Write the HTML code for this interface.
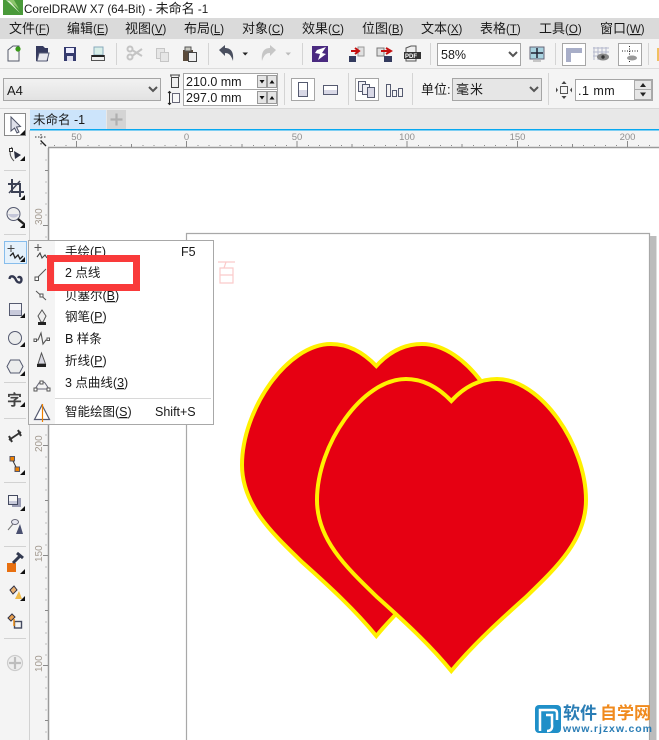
<!DOCTYPE html>
<html><head><meta charset="utf-8"><style>
html,body{margin:0;padding:0;background:#fff;width:659px;height:740px;overflow:hidden}
svg{display:block}
text{font-family:"Liberation Sans","Noto Sans CJK SC",sans-serif;font-size:12.5px;fill:#1a1a1a}
.m{font-size:13px}
.l{font-size:11.5px}
.rl{font-size:9.5px;fill:#8f8f8f}
.rv{font-size:10px;fill:#a39a90}
</style></head><body>
<svg width="659" height="740" viewBox="0 0 659 740" xmlns="http://www.w3.org/2000/svg">
<defs>
<path id="h" d="M451.3 401C437 386 422 379 406 379C362 379 317 445 317 500C317 540 347 568 377 597C405 622 430 645 451.3 671C473 645 498 622 526 597C556 568 586 540 586 500C586 445 541 379 497 379C481 379 465 386 451.3 401Z" fill="#e60012" stroke="#fff000" stroke-width="4"/>
<path id="tri" d="M0 5L5 5L5 0Z" fill="#111"/>
<linearGradient id="cb" x1="0" y1="0" x2="0" y2="1"><stop offset="0" stop-color="#f2f2f2"/><stop offset="1" stop-color="#e2e2e2"/></linearGradient>
</defs>
<rect width="659" height="740" fill="#fff"/>

<!-- title -->
<rect x="3" y="0" width="20" height="15" fill="#4a9a3a"/>
<path d="M6 0L20 13L10 1Z" fill="#dff0d0"/><path d="M8 0L19 9L14 0Z" fill="#8cc66c"/>
<text x="24" y="13" style="font-size:13px"><tspan style="font-size:11.6px">CorelDRAW X7 (64-Bit) - </tspan>未命名<tspan style="font-size:11.6px"> -1</tspan></text>

<!-- menu -->
<rect y="18" width="659" height="21" fill="#dadada"/>
<text class="m" x="9" y="33">文件<tspan class="l">(<tspan text-decoration="underline">F</tspan>)</tspan></text>
<text class="m" x="67" y="33">编辑<tspan class="l">(<tspan text-decoration="underline">E</tspan>)</tspan></text>
<text class="m" x="125" y="33">视图<tspan class="l">(<tspan text-decoration="underline">V</tspan>)</tspan></text>
<text class="m" x="184" y="33">布局<tspan class="l">(<tspan text-decoration="underline">L</tspan>)</tspan></text>
<text class="m" x="242" y="33">对象<tspan class="l">(<tspan text-decoration="underline">C</tspan>)</tspan></text>
<text class="m" x="302" y="33">效果<tspan class="l">(<tspan text-decoration="underline">C</tspan>)</tspan></text>
<text class="m" x="362" y="33">位图<tspan class="l">(<tspan text-decoration="underline">B</tspan>)</tspan></text>
<text class="m" x="421" y="33">文本<tspan class="l">(<tspan text-decoration="underline">X</tspan>)</tspan></text>
<text class="m" x="480" y="33">表格<tspan class="l">(<tspan text-decoration="underline">T</tspan>)</tspan></text>
<text class="m" x="539" y="33">工具<tspan class="l">(<tspan text-decoration="underline">O</tspan>)</tspan></text>
<text class="m" x="600" y="33">窗口<tspan class="l">(<tspan text-decoration="underline">W</tspan>)</tspan></text>

<!-- toolbars -->
<rect y="39" width="659" height="69" fill="#f4f4f4"/>
<rect y="68" width="659" height="1" fill="#dcdcdc"/>
<rect y="108" width="659" height="1" fill="#d8d8d8"/>
<g fill="#d4d4d4">
<rect x="116" y="43" width="1" height="22"/><rect x="208" y="43" width="1" height="22"/><rect x="302" y="43" width="1" height="22"/><rect x="430" y="43" width="1" height="22"/><rect x="555" y="43" width="1" height="22"/><rect x="648" y="43" width="1" height="22"/>
<rect x="284" y="73" width="1" height="32"/><rect x="348" y="73" width="1" height="32"/><rect x="412" y="73" width="1" height="32"/><rect x="548" y="73" width="1" height="32"/>
</g>

<!-- row 1 icons -->
<path d="M8 50L13 46H19V61H8Z" fill="#f6f6f6" stroke="#555a6a"/><circle cx="18" cy="49" r="2.6" fill="#3b9b1a"/>
<path d="M36 46H43L45 48H48V61H36Z" fill="#353a5e"/><path d="M37 61L39 53H49L47 61Z" fill="#e9e9ef" stroke="#555a75"/>
<rect x="64" y="47" width="12" height="14" fill="#343a6e"/><rect x="66" y="48" width="8" height="5" fill="#eef"/><rect x="67" y="56" width="6" height="5" fill="#dde"/>
<rect x="94" y="47" width="9" height="8" fill="#d8eee8" stroke="#8ab"/><rect x="91.500" y="55.500" width="13" height="5" fill="#eee" stroke="#555"/><rect x="92" y="55" width="12" height="2" fill="#222"/>
<g fill="none" stroke="#c4c4c4" stroke-width="2"><circle cx="130" cy="57" r="2.500"/><circle cx="130" cy="49" r="2.500"/><path d="M132 50L142 56M132 56L142 49"/></g>
<g fill="#e6e6e6" stroke="#c6c6c6"><rect x="156.500" y="48.500" width="8" height="10"/><rect x="160.500" y="52.500" width="8" height="9"/></g>
<rect x="183" y="50" width="10" height="11" fill="#5a4a3a"/><rect x="185" y="47" width="6" height="4" fill="#c8c8c0" stroke="#555"/><rect x="188.500" y="52.500" width="8" height="9" fill="#eee" stroke="#444"/>
<path d="M219 50L225 45V48C231 48 234 52 233 61C231 55 229 53 225 53V56Z" fill="#4a4f5f"/>
<path d="M242.500 52.500L248 52.500L245.200 55.500Z" fill="#222"/>
<path d="M276 50L270 45V48C264 48 261 52 262 61C264 55 266 53 270 53V56Z" fill="#c6c6c6"/>
<path d="M285.500 52.500L291 52.500L288.200 55.500Z" fill="#bbb"/>
<rect x="312" y="46" width="16" height="16" fill="#4a2a80"/><path d="M317 50L326 47L322 53L326 54L318 60L320 54L315 53Z" fill="#fff"/>
<rect x="349" y="56" width="7" height="6" fill="#333a5e"/><rect x="358" y="47" width="6" height="9" fill="#e0e0e0" stroke="#999"/><path d="M351 51H358M355 48L359 51L355 54" stroke="#c41010" stroke-width="2" fill="none"/>
<rect x="377" y="48" width="7" height="8" fill="#e0e0e0" stroke="#777"/><rect x="384" y="56" width="8" height="6" fill="#333a5e"/><path d="M381 51H390M386 48L391 51L386 54" stroke="#c41010" stroke-width="2" fill="none"/>
<path d="M406 48L411 46H416V61H406Z" fill="#eee" stroke="#555"/><rect x="404" y="52" width="17" height="7" fill="#333"/><text x="405" y="58" style="font-size:6px;font-weight:bold;fill:#fff">PDF</text>

<rect x="437.500" y="43.500" width="83" height="22" fill="#fff" stroke="#a6a6a6"/>
<text x="441" y="59" style="font-size:12.500px">58%</text>
<path d="M509 52L513 56L517 52" fill="none" stroke="#555" stroke-width="2"/>
<rect x="530" y="47" width="14" height="12" fill="#a9d3e0" stroke="#667"/><path d="M537 48V58M531 53H543" stroke="#223" stroke-width="1.500"/><path d="M533 61H541" stroke="#999"/>
<rect x="562.500" y="43.500" width="23" height="22" fill="#fff" stroke="#a6a6a6"/><path d="M566 48H582V53H571V62H566Z" fill="#a8aec8"/>
<g stroke="#b4b8cc"><path d="M594 47V60M598 47V60M602 47V60M606 47V60M593 48H609M593 52H609M593 56H609"/></g><ellipse cx="603" cy="57" rx="6" ry="3.500" fill="#888"/><circle cx="603" cy="57" r="1.700" fill="#333"/>
<rect x="618.500" y="43.500" width="23" height="22" fill="#fff" stroke="#a6a6a6"/><path d="M622 51H638M629.500 46V62" stroke="#222" stroke-dasharray="1 1.500"/><ellipse cx="632" cy="58" rx="5" ry="2.500" fill="#999"/>
<rect x="657" y="48" width="2" height="13" fill="#f0c060"/>

<!-- row 2 -->
<rect x="3.500" y="78.500" width="157" height="22" fill="url(#cb)" stroke="#a6a6a6"/>
<text x="7" y="95" style="font-size:13px">A4</text>
<path d="M149 87L153 91L157 87" fill="none" stroke="#555" stroke-width="2"/>
<rect x="171.500" y="77.500" width="7" height="10" fill="#f0f0f0" stroke="#444"/><path d="M171 75V77M179 75V77M170 75H180" stroke="#444"/>
<path d="M169.500 92V104M168 93L169.500 91.500L171 93M168 103L169.500 104.500L171 103" stroke="#222" fill="none"/><rect x="172.500" y="93.500" width="7" height="9" fill="#f8f8f8" stroke="#667"/>
<rect x="183.500" y="73.500" width="94" height="32" fill="#fff" stroke="#a6a6a6"/><path d="M183 89.500H278" stroke="#a6a6a6"/>
<text x="186" y="86" style="font-size:12.500px">210.0 mm</text><text x="186" y="102" style="font-size:12.500px">297.0 mm</text>
<g fill="#e4e4e4" stroke="#999"><rect x="257.500" y="75.500" width="9" height="12"/><rect x="267.500" y="75.500" width="9" height="12"/><rect x="257.500" y="91.500" width="9" height="12"/><rect x="267.500" y="91.500" width="9" height="12"/></g>
<g fill="#111"><path d="M259.500 80H264.500L262 83.500ZM259.500 96H264.500L262 99.500Z"/><path d="M269.500 83.500H274.500L272 80ZM269.500 99.500H274.500L272 96Z"/></g>
<rect x="291.500" y="78.500" width="23" height="22" fill="#fff" stroke="#a6a6a6"/><rect x="298.500" y="82.500" width="9" height="14" fill="#fff" stroke="#555a70"/><rect x="299" y="90" width="8" height="6" fill="#d8d8e6"/>
<rect x="323.500" y="85.500" width="14" height="9" fill="#fff" stroke="#555a70"/><rect x="324" y="90" width="13" height="4" fill="#d8d8e6"/>
<rect x="355.500" y="78.500" width="23" height="22" fill="#fff" stroke="#a6a6a6"/>
<g fill="#eeeef4" stroke="#555a70"><rect x="358.500" y="81.500" width="7" height="10"/><rect x="362.500" y="84.500" width="7" height="10"/><rect x="367.500" y="87.500" width="7" height="10" fill="#d8d8e6"/></g>
<g fill="#f4f4f4" stroke="#555a70"><rect x="386.500" y="84.500" width="4" height="12"/><rect x="392.500" y="90.500" width="4" height="6"/><rect x="398.500" y="88.500" width="4" height="8"/></g>
<text x="421" y="94" style="font-size:13px">单位:</text>
<rect x="452.500" y="78.500" width="89" height="22" fill="#e6e6e6" stroke="#a6a6a6"/>
<text x="456" y="94" style="font-size:13px;letter-spacing:1px">毫米</text>
<path d="M530 87L534 91L538 87" fill="none" stroke="#555" stroke-width="2"/>
<rect x="560.500" y="86.500" width="7" height="7" fill="#f4f4f4" stroke="#555"/><path d="M564 81L561.500 84H566.500ZM564 99L561.500 96H566.500ZM558 90L556 87.500V92.500ZM570 90L572 87.500V92.500Z" fill="#444"/>
<rect x="575.500" y="79.500" width="77" height="21" fill="#fff" stroke="#a6a6a6"/>
<text x="578" y="95" style="font-size:12.500px;letter-spacing:.5px">.1 mm</text>
<rect x="634.500" y="80.500" width="17" height="9" fill="#e6e6e6" stroke="#aaa"/><rect x="634.500" y="89.500" width="17" height="10" fill="#e6e6e6" stroke="#aaa"/>
<path d="M640 87H646L643 83ZM640 92.500H646L643 96.500Z" fill="#222"/>

<!-- tabs -->
<rect y="109" width="659" height="20" fill="#f4f4f4"/>
<rect x="30" y="109" width="629" height="20" fill="#e8e8e8"/>
<rect x="30" y="110" width="76" height="19" fill="#cce4fb"/>
<text x="33" y="124" style="font-size:12.500px">未命名 -1</text>
<rect x="107" y="110" width="19" height="19" fill="#d4d4d4"/>
<path d="M110.500 119.500H122.500M116.500 113.500V125.500" stroke="#b0b0b0" stroke-width="2.200"/>
<rect x="30" y="129" width="629" height="1.500" fill="#08a8f0"/>

<!-- rulers -->
<rect x="0" y="109" width="30" height="631" fill="#f4f4f4"/>
<rect x="29" y="130" width="1" height="610" fill="#d2d2d2"/>
<rect x="30" y="130.500" width="629" height="17.500" fill="#f4f4f4"/>
<rect x="30" y="130.500" width="18" height="609.500" fill="#f4f4f4"/>
<path d="M48.500 148V740" stroke="#9a9a9a" stroke-width="1.500"/>
<path d="M48 147.500H659" stroke="#9a9a9a" stroke-width="1.500"/>
<path d="M35 137H47M41 134V146" stroke="#222" stroke-dasharray="1.500 1.500" opacity=".9"/>
<path d="M41 141L46 146" stroke="#222" stroke-width="1.300"/>
<text class="rl" x="76.500" y="140" text-anchor="middle">50</text>
<text class="rl" x="186.500" y="140" text-anchor="middle">0</text>
<text class="rl" x="297" y="140" text-anchor="middle">50</text>
<text class="rl" x="407" y="140" text-anchor="middle">100</text>
<text class="rl" x="517.500" y="140" text-anchor="middle">150</text>
<text class="rl" x="627.500" y="140" text-anchor="middle">200</text>
<g stroke="#8a8a8a">
<path d="M76.500 141V147M186.500 141V147M297 141V147M407 141V147M517.500 141V147M627.500 141V147M131.500 144V147M242 144V147M352 144V147M462 144V147M572.500 144V147"/>
<path d="M54 145.500h1M65.500 145.500h1M87.500 145.500h1M98.500 145.500h1M109.500 145.500h1M120.500 145.500h1M142.500 145.500h1M153.500 145.500h1M164.500 145.500h1M175.500 145.500h1M197.500 145.500h1M208.500 145.500h1M219.500 145.500h1M230.500 145.500h1M253 145.500h1M264 145.500h1M275 145.500h1M286 145.500h1M308 145.500h1M319 145.500h1M330 145.500h1M341 145.500h1M363 145.500h1M374 145.500h1M385 145.500h1M396 145.500h1M418 145.500h1M429 145.500h1M440 145.500h1M451 145.500h1M473 145.500h1M484 145.500h1M495 145.500h1M506 145.500h1M528 145.500h1M539 145.500h1M550 145.500h1M561 145.500h1M583 145.500h1M594 145.500h1M605 145.500h1M616 145.500h1M638 145.500h1M649 145.500h1"/>
<path d="M43 225.500H48M43 445.500H48M43 555.500H48M43 665.500H48M45 170.500H48M45 280.500H48M45 390.500H48M45 500.500H48M45 610.500H48M45 720.500H48"/>
<path d="M46 159.500v1M46 181.500v1M46 192.500v1M46 203.500v1M46 214.500v1M46 236.500v1M46 434.500v1M46 456.500v1M46 467.500v1M46 478.500v1M46 489.500v1M46 511.500v1M46 522.500v1M46 533.500v1M46 544.500v1M46 566.500v1M46 577.500v1M46 588.500v1M46 599.500v1M46 621.500v1M46 632.500v1M46 643.500v1M46 654.500v1M46 676.500v1M46 687.500v1M46 698.500v1M46 709.500v1M46 731.500v1"/>
</g>
<text class="rv" transform="translate(42 225) rotate(-90)">300</text>
<text class="rv" transform="translate(42 452) rotate(-90)">200</text>
<text class="rv" transform="translate(42 562) rotate(-90)">150</text>
<text class="rv" transform="translate(42 672) rotate(-90)">100</text>

<!-- page -->
<path d="M186.500 740V233.500H649.500V740" fill="#fff" stroke="#a8a8a8" stroke-width="1.200"/>
<rect x="650" y="236" width="6.500" height="504" fill="#bcbcbc"/>
<path d="M218 262H235M226 262L224 268M220 268H233V283H220ZM220 275H233" fill="none" stroke="#fbcaca" stroke-width="1.200"/>

<!-- hearts -->
<use href="#h" transform="translate(-75 -35)"/>
<use href="#h"/>

<!-- toolbox -->
<g fill="#d2d2d2"><rect x="4" y="170" width="22" height="1"/><rect x="4" y="234" width="22" height="1"/><rect x="4" y="382" width="22" height="1"/><rect x="4" y="418" width="22" height="1"/><rect x="4" y="482" width="22" height="1"/><rect x="4" y="546" width="22" height="1"/><rect x="4" y="638" width="22" height="1"/></g>
<rect x="4.500" y="113.500" width="21" height="22" fill="#fff" stroke="#8a8a8a"/>
<path d="M11 117L11 131L14.500 128L17 133L19 132L16.500 127L20.500 126.500Z" fill="#dfe1ea" stroke="#4e5367"/>
<use href="#tri" x="20" y="130"/>
<path d="M12 147C9 152 10 157 14 161" fill="none" stroke="#555"/><rect x="9.500" y="148.500" width="3" height="3" fill="#fff" stroke="#333"/><path d="M14 151L21 155L15 159Z" fill="#2c3040"/>
<use href="#tri" x="20" y="156"/>
<path d="M12 179V192H24M8 184H20V197" fill="none" stroke="#3c4154" stroke-width="2"/><path d="M9 193L20 181" stroke="#3c4154" stroke-width="1.500"/>
<use href="#tri" x="20" y="195"/>
<circle cx="13.500" cy="214" r="6.500" fill="#eee" stroke="#555a70"/><path d="M8 214H19A6 6 0 0 1 8 214Z" fill="#c4c6d8"/><path d="M18 219L24 224" stroke="#222" stroke-width="2.400"/>
<use href="#tri" x="20" y="223"/>
<rect x="4.500" y="241.500" width="22" height="22" fill="#e5f1fb" stroke="#87bdec"/>
<path d="M11 245V252M7.500 248.500H14.500" stroke="#444"/><path d="M10 256L13 253L15 258L18 255L20 259L23 256" fill="none" stroke="#222" stroke-width="1.300"/>
<use href="#tri" x="20" y="257"/>
<path d="M9.500 279C10 275 14 276 15.500 279C17 283 21 284 21.500 280C21.500 277 19 276 18 278" fill="none" stroke="#333850" stroke-width="2.400"/>
<rect x="9.500" y="303.500" width="12" height="12" fill="#f4f4f8" stroke="#555a70"/><rect x="10" y="310" width="11" height="5" fill="#c8cadb"/>
<use href="#tri" x="20" y="313"/>
<circle cx="15" cy="338" r="6.500" fill="#eceded" stroke="#555a70"/>
<use href="#tri" x="20" y="342"/>
<path d="M10.500 360H19.500L23 366.500L19.500 373H10.500L7 366.500Z" fill="#eceded" stroke="#555a70"/>
<use href="#tri" x="20" y="371"/>
<text x="7" y="405" style="font-size:15px;font-weight:bold;fill:#444">字</text>
<use href="#tri" x="20" y="402"/>
<path d="M9 440L21 432" stroke="#333" stroke-width="1.800"/><path d="M9 436L12 442M18 430L21 436" stroke="#333" stroke-width="2"/>
<rect x="10" y="456.500" width="4.500" height="4.500" fill="#ee8100" stroke="#556"/><rect x="15" y="467" width="4.500" height="4.500" fill="#ee8100" stroke="#556"/><path d="M13 461L16 467" stroke="#333"/>
<use href="#tri" x="20" y="470"/>
<rect x="12" y="498" width="9" height="9" fill="#9a9cb4"/><rect x="8.500" y="495.500" width="9" height="9" fill="#f6f6f6" stroke="#444a60"/><path d="M9 501h8v3h-8z" fill="#c8cadb"/>
<use href="#tri" x="20" y="506"/>
<path d="M8 530L13 524" stroke="#777"/><ellipse cx="15" cy="522" rx="3.500" ry="2.500" fill="#e8e8f0" stroke="#667"/><path d="M16 534L20 524L23 534Z" fill="#4a5070"/>
<rect x="7" y="563" width="9" height="9" fill="#e87010"/><path d="M13 563L20 556M17 553L23 558" stroke="#333a50" stroke-width="3"/>
<use href="#tri" x="20" y="569"/>
<path d="M10 590L14 586L17 590L13 594Z" fill="#e9b070" stroke="#334"/><path d="M15 599L19 591L22 599Z" fill="#f1bb4a"/>
<use href="#tri" x="20" y="596"/>
<path d="M8 618L12 614L15 617L11 621Z" fill="#e9a050" stroke="#334"/><rect x="14.500" y="621.500" width="7" height="6.500" fill="none" stroke="#444a60" stroke-width="1.400"/><path d="M14 619L14 626" stroke="#e88810" stroke-width="1.500"/>
<circle cx="15" cy="663" r="7.500" fill="#eee" stroke="#cccccc" stroke-width="1.200"/><path d="M9 663H21M15 657V669" stroke="#bdbdbd" stroke-width="2.200"/>

<!-- popup -->
<rect x="28.500" y="240.500" width="185" height="184" fill="#fff" stroke="#a8a8a8"/>
<rect x="29" y="241" width="26" height="183" fill="#f4f4f4"/>
<rect x="55" y="398" width="156" height="1" fill="#d8d8d8"/>
<path d="M38 244V251M34.500 247.500H41.500" stroke="#555"/><path d="M37 257L40 253L42 258L45 255L47 258" fill="none" stroke="#444" stroke-width="1.100"/>
<path d="M37 278L46 269" stroke="#555"/><rect x="35" y="277" width="3.500" height="3.500" fill="#fff" stroke="#555"/>
<path d="M36 291L46 300" stroke="#555"/><rect x="40" y="294" width="3" height="3" fill="#fff" stroke="#555"/>
<path d="M42 310L38 316L41 322H43L46 316Z" fill="#eee" stroke="#555"/><rect x="38" y="322" width="8" height="3" fill="#222"/>
<path d="M34 340L38 340L41 333L43 344L46 340H49" fill="none" stroke="#555" stroke-width="1.100"/><rect x="34" y="339" width="2.500" height="2.500" fill="#fff" stroke="#555"/><rect x="47" y="338" width="2.500" height="2.500" fill="#fff" stroke="#555"/>
<path d="M41.500 353L38 364H45.500Z" fill="#d8d8e2" stroke="#555"/><rect x="37" y="364" width="9" height="3" fill="#222"/>
<path d="M35 389L39 383Q42 380 45 383L49 389Z" fill="none" stroke="#667"/><rect x="34" y="388" width="3" height="3" fill="#fff" stroke="#555"/><rect x="47" y="388" width="3" height="3" fill="#fff" stroke="#555"/><rect x="40" y="381" width="3" height="3" fill="#fff" stroke="#555"/>
<path d="M42 405L34.500 419.500H49.500Z" fill="#fff" stroke="#555a70" stroke-width="1.200"/><path d="M42.500 404V422" stroke="#ee8000" stroke-width="1.200"/>

<text x="65" y="256">手绘(<tspan text-decoration="underline">F</tspan>)</text><text x="181" y="256">F5</text>
<text x="65" y="277">2 点线</text>
<text x="65" y="300">贝塞尔(<tspan text-decoration="underline">B</tspan>)</text>
<text x="65" y="321">钢笔(<tspan text-decoration="underline">P</tspan>)</text>
<text x="65" y="343">B 样条</text>
<text x="65" y="365">折线(<tspan text-decoration="underline">P</tspan>)</text>
<text x="65" y="387">3 点曲线(<tspan text-decoration="underline">3</tspan>)</text>
<text x="65" y="416">智能绘图(<tspan text-decoration="underline">S</tspan>)</text><text x="155" y="416">Shift+S</text>

<rect x="50.500" y="258.500" width="86" height="29" fill="none" stroke="#f93a3a" stroke-width="7"/>

<!-- watermark -->
<rect x="535" y="705" width="26" height="28" rx="4" fill="#1f8fc8"/>
<path d="M540 731V710H554Q557 710 557 713V720" fill="none" stroke="#fff" stroke-width="2.500"/>
<path d="M547 731Q553 731 552 724V715H546" fill="none" stroke="#fff" stroke-width="2.500"/>
<text x="563" y="719" style="font-size:17px;font-weight:bold;fill:#2a7db5">软件</text>
<text x="600" y="719" style="font-size:17px;font-weight:bold;fill:#f08a1d">自学网</text>
<text x="563" y="732" style="font-size:10.500px;font-weight:bold;fill:#2a7db5" textLength="89">www.rjzxw.com</text>
</svg>
</body></html>
